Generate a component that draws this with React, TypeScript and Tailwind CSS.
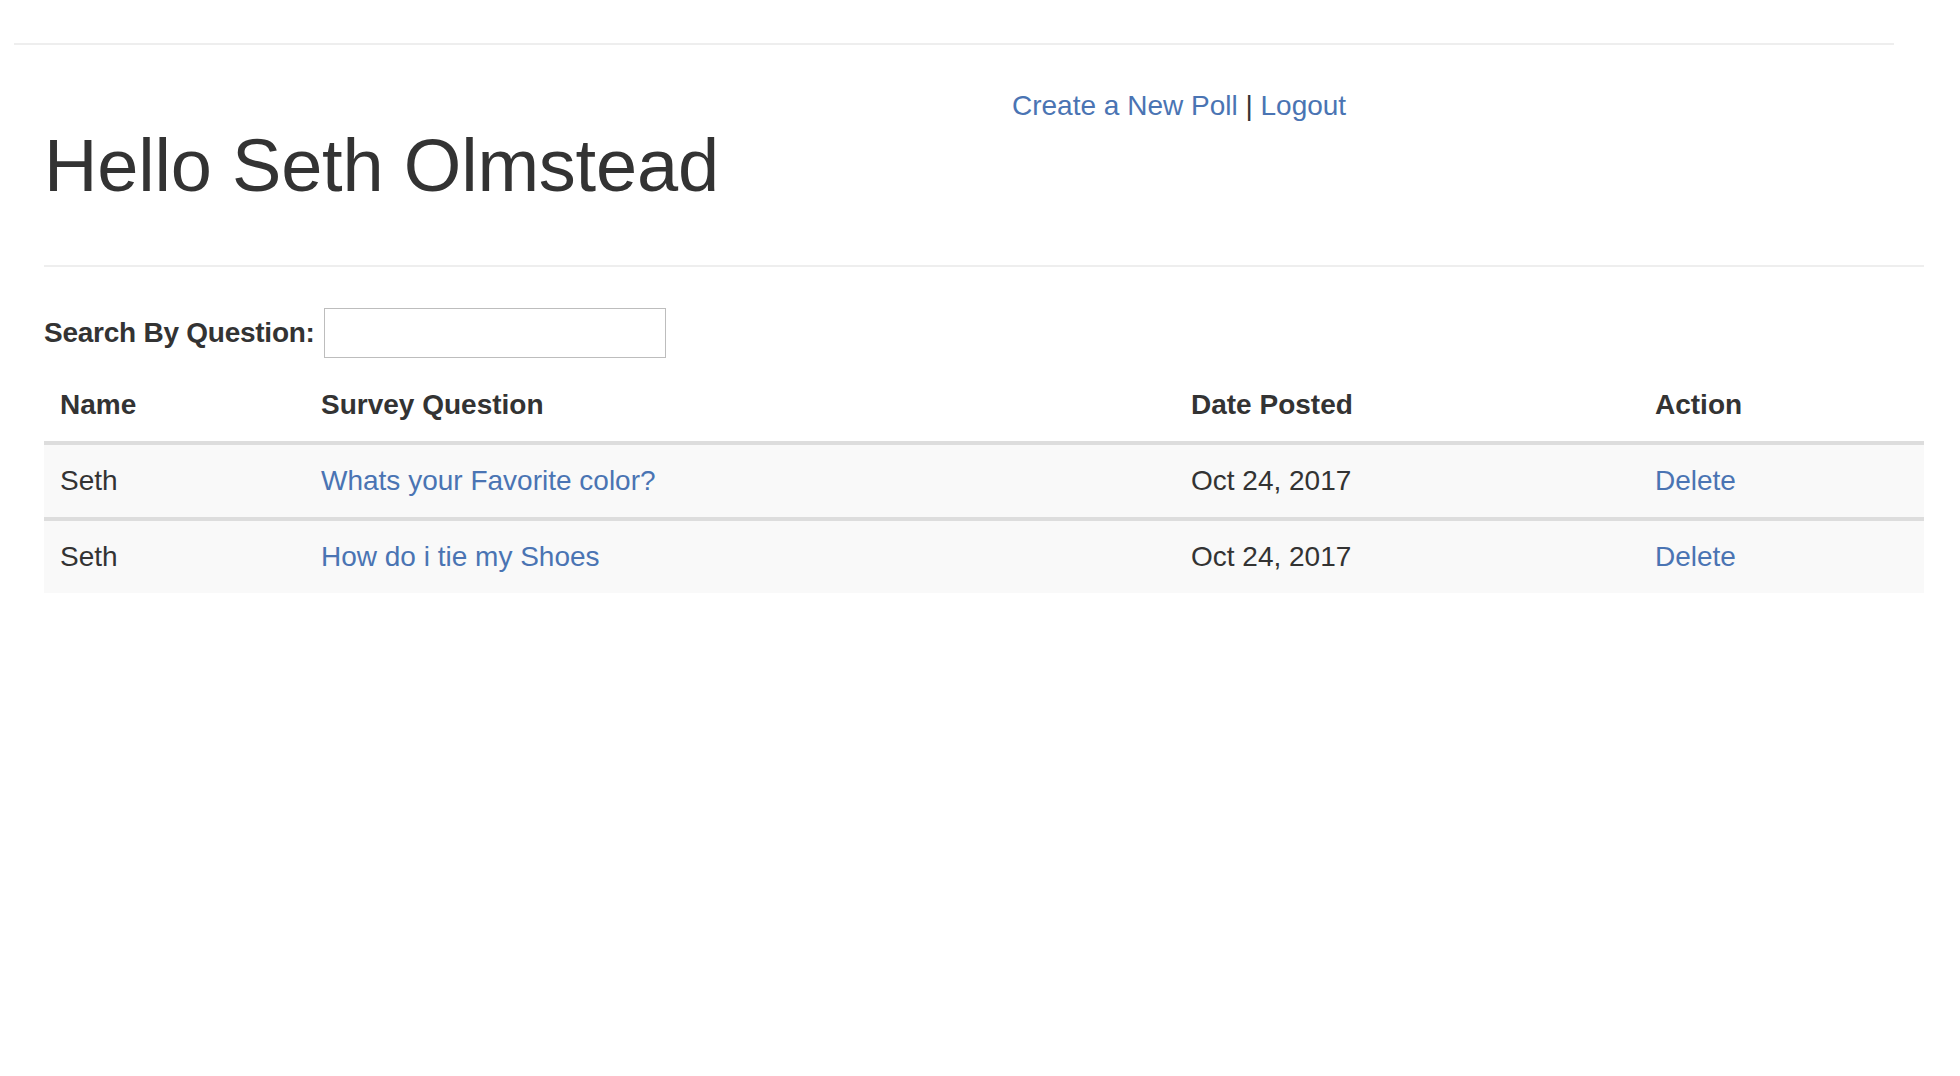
import React from "react";

const rows = [
  { name: "Seth", q: "Whats your Favorite color?", date: "Oct 24, 2017" },
  { name: "Seth", q: "How do i tie my Shoes", date: "Oct 24, 2017" },
];

const th = "h-[76px] px-4 text-left align-middle font-bold border-b-4 border-[#dddddd]";

export default function App() {
  return (
    <div
      className="min-h-[1076px] w-full bg-white text-[#333] text-[28px] leading-[40px]"
      style={{ fontFamily: '"Liberation Sans", Arial, Helvetica, sans-serif' }}
    >
      <div className="pt-[43px] pl-[14px]">
        <hr className="w-[1880px] border-0 border-t-2 border-[#eeeeee]" />
      </div>
      <div className="pl-[44px]">
        <div className="flex">
          <div className="w-[968px] shrink-0">
            <h1 className="mt-[81px] text-[74px] leading-[80px] font-normal text-[#333] tracking-[-0.2px]">
              Hello Seth Olmstead
            </h1>
          </div>
          <div className="mt-[41px]">
            <a href="#" className="text-[#4a74b3]">Create a New Poll</a>
            <span className="text-[#333]"> | </span>
            <a href="#" className="text-[#4a74b3]">Logout</a>
          </div>
        </div>
        <hr className="mt-[59px] w-[1880px] border-0 border-t-2 border-[#eeeeee]" />
        <div className="mt-[41px] flex items-center h-[50px]">
          <label className="font-bold mr-[9px] tracking-[-0.25px]">Search By Question:</label>
          <input
            type="text"
            className="w-[342px] h-[50px] border border-[#bdbdbd] bg-white outline-none"
          />
        </div>
        <table className="mt-[11px] w-[1880px] table-fixed border-separate border-spacing-0">
          <colgroup>
            <col className="w-[261px]" />
            <col className="w-[870px]" />
            <col className="w-[464px]" />
            <col className="w-[285px]" />
          </colgroup>
          <thead>
            <tr>
              <th className={th}>Name</th>
              <th className={th}>Survey Question</th>
              <th className={th}>Date Posted</th>
              <th className={th}>Action</th>
            </tr>
          </thead>
          <tbody>
            {rows.map((r, i) => {
              const td =
                i === 0
                  ? "h-[72px] px-4 align-middle bg-[#f9f9f9]"
                  : "h-[76px] px-4 align-middle bg-[#f9f9f9] border-t-4 border-[#dddddd]";
              return (
                <tr key={i}>
                  <td className={td}>{r.name}</td>
                  <td className={td}>
                    <a href="#" className="text-[#4a74b3]">{r.q}</a>
                  </td>
                  <td className={td}>{r.date}</td>
                  <td className={td}>
                    <a href="#" className="text-[#4a74b3]">Delete</a>
                  </td>
                </tr>
              );
            })}
          </tbody>
        </table>
      </div>
    </div>
  );
}
